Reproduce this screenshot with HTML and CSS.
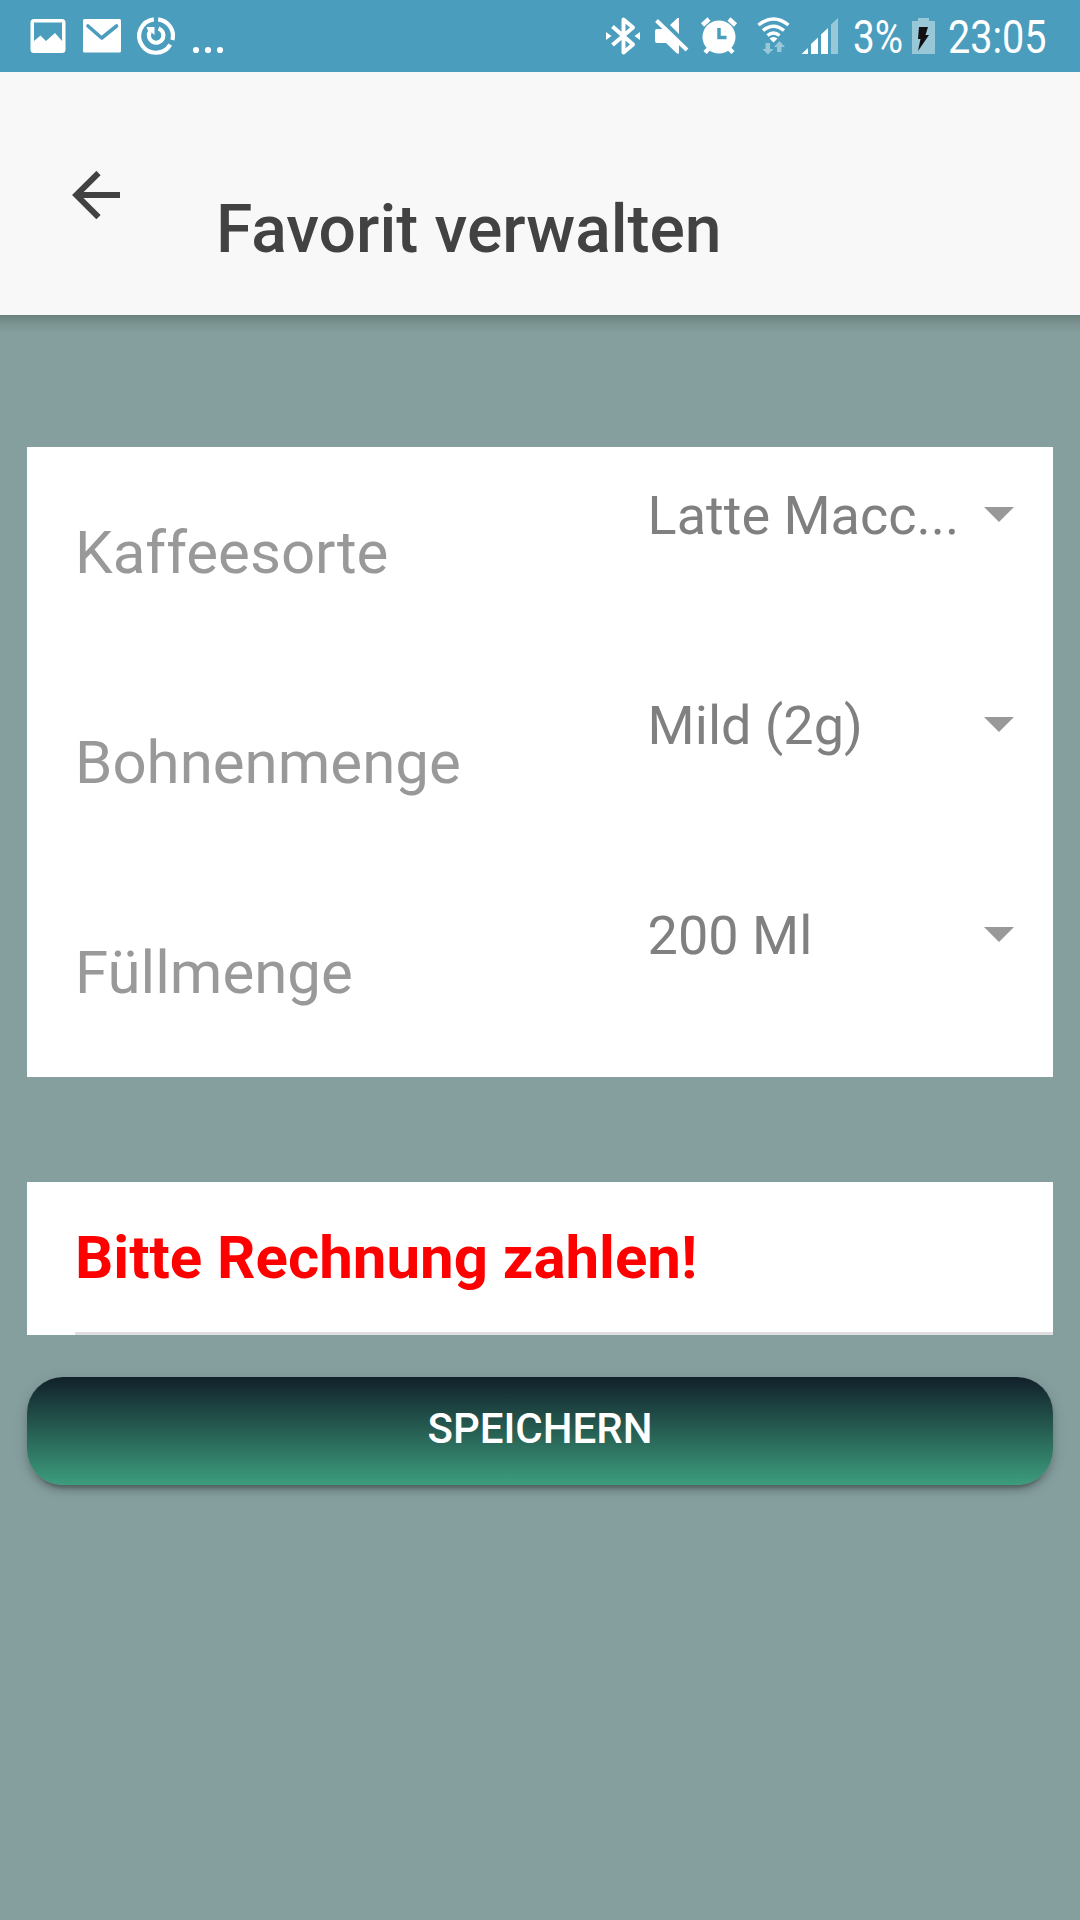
FILE: index.html
```html
<!DOCTYPE html>
<html lang="de">
<head>
<meta charset="utf-8">
<title>Favorit verwalten</title>
<link rel="stylesheet" href="styles.css">
</head>
<body>
<div class="status">
  <svg class="status-icons" width="240" height="72" viewBox="0 0 240 72" fill="#fff">
    <path fill-rule="evenodd" d="M34 19h28q3.500 0 3.500 3.500v27q0 3.500-3.500 3.500H34q-3.500 0-3.500-3.500v-27Q30.500 19 34 19zM34 22.500V41l6.500-5.500 5.500 5.500 9-8 7 8V22.500z"/>
    <rect x="83" y="19" width="38" height="33.500" rx="1.500"/>
    <path d="M88 26l13.700 12L116.500 26" fill="none" stroke="#4a9dbd" stroke-width="3.600" stroke-linecap="round" stroke-linejoin="round"/>
    <g fill="none" stroke="#fff" stroke-width="4.200">
      <path d="M153.800 19.300A16.800 16.800 0 1 0 170.300 44.700"/>
      <path d="M158.200 19.300A16.800 16.800 0 0 1 172.500 40"/>
      <path d="M150 31.500A7.300 7.300 0 1 0 158.500 28.500"/>
    </g>
    <path d="M146.500 27H154.500V35L151.500 32.500 148.500 32z"/>
    <circle cx="196" cy="50" r="3.100"/><circle cx="208" cy="50" r="3.100"/><circle cx="220" cy="50" r="3.100"/>
  </svg>
  <div class="status-right">
    <svg width="244" height="72" viewBox="600 0 244 72" fill="#fff">
      <path d="M612.500 26.500L633 44.500 623.500 52.500V19.500L633 27.500 612.500 45" fill="none" stroke="#fff" stroke-width="4" stroke-linejoin="round"/>
      <path d="M606 32l5.500 4-5.500 4zM640 32l-5.500 4 5.500 4z"/>
      <path d="M657 29h8.500L679 42v11.500h-2L666 43h-9q-2 0-2-2V31q0-2 2-2zM670 25l7.500-7h1.500v16z"/>
      <path d="M656.500 20.500l30.500 29.500" stroke="#fff" stroke-width="4"/>
      <circle cx="719" cy="37" r="16.500"/>
      <path d="M702.500 25l6.500-6M735.500 25l-6.500-6M705 52.500l5-5M733 52.500l-5-5" stroke="#fff" stroke-width="4.500"/>
      <path d="M719 28v9.500h7.500" fill="none" stroke="#4a9dbd" stroke-width="3.500"/>
      <g fill="none" stroke="#fff" stroke-width="3.500">
        <path d="M758.500 25Q773.500 13 788.500 25"/><path d="M763 30.500Q773.500 22 784 30.500"/><path d="M767.500 35.500Q773.500 30.500 779.500 35.500"/>
      </g>
      <path d="M769.500 38.500q4-3 8 0l-4 4z"/>
      <path fill="#98c7d8" d="M765.500 43h4.500v6h3.500l-5.500 5.500-5.500-5.500h3zM777 52v-5h-3l5.500-6 5.500 6h-3.500v5z"/>
      <path d="M801.500 54l6.500-6v6zM811 54V44l7-6.500V54zM821 54V34.500l7-6.500V54z"/>
      <path fill="#98c7d8" d="M831 54V24.500l7-6.500V54z"/>
    </svg>
    <span class="percent">3%</span>
    <svg class="battery" width="24" height="72" viewBox="912 0 24 72">
      <path fill="#98c7d8" d="M912 21h6v-3h11v3h6v33h-23z"/>
      <path fill="#111" d="M919 27h9l-2.500 8h3.500L918 51l2.500-12H918z"/>
    </svg>
    <span class="clock">23:05</span>
  </div>
</div>
<header class="header">
  <svg class="back" width="48" height="48" viewBox="0 0 48 48" fill="none" stroke="#424242" stroke-width="6"><path d="M48 24H5M26.500 2L4.300 24l22.200 22.200"/></svg>
  <h1 class="title">Favorit verwalten</h1>
</header>
<main class="content">
  <section class="list">
    <div class="row"><span class="label">Kaffeesorte</span><div class="select"><span class="value">Latte Macc...</span><i class="caret"></i></div></div>
    <div class="row"><span class="label">Bohnenmenge</span><div class="select"><span class="value">Mild (2g)</span><i class="caret"></i></div></div>
    <div class="row"><span class="label">Füllmenge</span><div class="select"><span class="value">200 Ml</span><i class="caret"></i></div></div>
  </section>
  <section class="notice"><p class="notice-text">Bitte Rechnung zahlen!</p></section>
  <button class="save"><span class="save-text">SPEICHERN</span></button>
</main>
</body>
</html>
```
FILE: styles.css
```css
* { box-sizing: border-box; }
body {
  margin: 0;
  width: 1080px;
  height: 1920px;
  overflow: hidden;
  display: flex;
  flex-direction: column;
  background: #859e9e;
  font-family: Roboto, "Liberation Sans", sans-serif;
}
svg { display: block; flex: none; }
.status {
  height: 72px;
  display: flex;
  justify-content: space-between;
  background: #4a9dbd;
  color: #fff;
}
.status-right {
  display: flex;
  width: 480px;
  font-size: 46px;
  line-height: 75px;
  white-space: nowrap;
}
.percent {
  width: 57px;
  margin-left: 9px;
  transform: scaleX(.84);
  transform-origin: left;
}
.battery { margin-left: 2px; }
.clock {
  margin-left: 12px;
  transform: scaleX(.86);
  transform-origin: left;
}
.header {
  height: 243px;
  display: flex;
  align-items: flex-start;
  background: #f8f8f8;
  color: #424242;
}
.back { margin: 99px 0 0 72px; }
.title {
  margin: 118px 0 0 96px;
  font-size: 66px;
  line-height: 80px;
  font-weight: 500;
  white-space: nowrap;
}
.content {
  flex: 1;
  display: flex;
  flex-direction: column;
  padding: 132px 27px 0;
  background: linear-gradient(#6a817d, #7a928f 8px, #859e9e 18px, #859e9e);
}
.list { background: #fff; }
.row {
  height: 210px;
  display: flex;
  justify-content: space-between;
  align-items: flex-start;
  padding-left: 48px;
}
.label {
  margin-top: 70px;
  font-size: 60px;
  line-height: 72px;
  color: #999;
}
.select {
  width: 405.4px;
  margin-top: 36px;
  padding-right: 39px;
  display: flex;
  justify-content: space-between;
  align-items: center;
}
.value {
  font-size: 54px;
  line-height: 66px;
  color: #808080;
}
.caret {
  width: 30px;
  height: 15px;
  margin-bottom: 3px;
  background: #999;
  clip-path: polygon(0 0, 100% 0, 50% 100%);
}
.notice {
  height: 153px;
  margin-top: 105px;
  padding-left: 48px;
  background: #fff;
}
.notice-text {
  height: 153px;
  margin: 0;
  border-bottom: 3px solid #dedede;
  font-size: 60px;
  line-height: 151px;
  font-weight: 700;
  color: #f00;
}
.save {
  height: 108px;
  margin-top: 42px;
  padding: 0 0 5px;
  border: 0;
  border-radius: 36px;
  background: linear-gradient(#11202a, #3c9d7c);
  box-shadow: 0 6px 6px rgba(0,0,0,.14), 0 9px 3px -6px rgba(0,0,0,.2), 0 3px 15px rgba(0,0,0,.12);
  color: #fff;
  font: 500 42px/48px Roboto, "Liberation Sans", sans-serif;
}
```
